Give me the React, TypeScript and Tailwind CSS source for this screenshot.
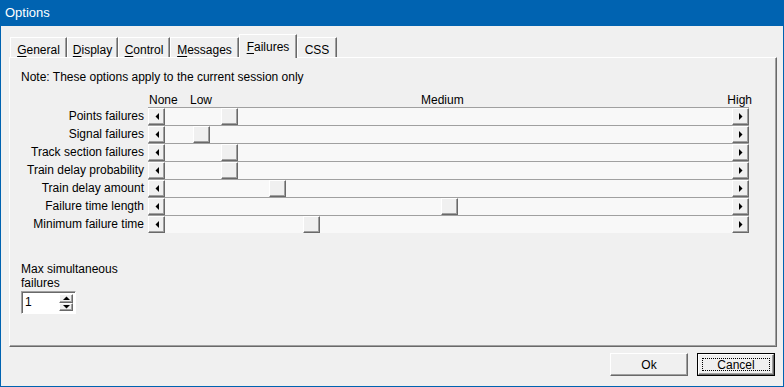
import type { ReactNode } from 'react';

const TABS = [
  { key: 'G', rest: 'eneral', w: 'w-[57px]' },
  { key: 'D', rest: 'isplay', w: 'w-[51px]' },
  { key: 'C', rest: 'ontrol', w: 'w-[52px]' },
  { key: 'M', rest: 'essages', w: 'w-[69px]' },
  { key: 'F', rest: 'ailures', w: 'w-[58px]', active: true },
  { key: '', rest: 'CSS', w: 'w-[40px]' },
];

const SLIDERS = [
  { label: 'Points failures', pos: 'ml-[56px]' },
  { label: 'Signal failures', pos: 'ml-[28px]' },
  { label: 'Track section failures', pos: 'ml-[56px]' },
  { label: 'Train delay probability', pos: 'ml-[56px]' },
  { label: 'Train delay amount', pos: 'ml-[104px]' },
  { label: 'Failure time length', pos: 'ml-[276px]' },
  { label: 'Minimum failure time', pos: 'ml-[138px]' },
];

function Btn3d({ className = '', children }: { className?: string; children?: ReactNode }) {
  return (
    <div
      className={`flex items-center justify-center bg-[#f0f0f0] border border-t-white border-l-white border-r-[#696969] border-b-[#696969] shadow-[inset_-1px_-1px_#a0a0a0] ${className}`}
    >
      {children}
    </div>
  );
}

function Arrow({ dir }: { dir: 'left' | 'right' | 'up' | 'down' }) {
  const pts = {
    left: '4,0 4,7 0.5,3.5',
    right: '0,0 0,7 3.5,3.5',
    up: '0,4 7,4 3.5,0.5',
    down: '0,0 7,0 3.5,3.5',
  }[dir];
  const horiz = dir === 'left' || dir === 'right';
  return (
    <svg width={horiz ? 4 : 7} height={horiz ? 7 : 4} viewBox={horiz ? '0 0 4 7' : '0 0 7 4'}>
      <polygon points={pts} fill="#000" />
    </svg>
  );
}

function Slider({ pos }: { pos: string }) {
  return (
    <div className="flex w-[601px] h-[18px] border-t border-[#a0a0a0]">
      <Btn3d className="w-[17px] h-[17px] shrink-0">
        <Arrow dir="left" />
      </Btn3d>
      <div className="flex flex-1 bg-[#f8f8f8]">
        <Btn3d className={`w-[17px] h-[17px] shrink-0 ${pos}`} />
      </div>
      <Btn3d className="w-[17px] h-[17px] shrink-0">
        <Arrow dir="right" />
      </Btn3d>
    </div>
  );
}

export default function App() {
  return (
    <div className="w-[784px] h-[387px] flex flex-col bg-[#f0f0f0] text-[12px] text-black font-['Liberation_Sans',Arial,sans-serif] overflow-hidden">
      <div className="h-[26px] shrink-0 bg-[#0063b1] text-white text-[13px] flex items-center pl-[5px]">Options</div>

      <div className="flex-1 flex flex-col border-x border-b border-[#0063b1] pl-[8px] pr-[6px] pt-[8px]">
        {/* tab strip */}
        <div className="h-[23px] flex items-end pl-[1px]">
          {TABS.map((t) => (
            <div
              key={t.rest}
              className={`${t.w} flex items-start justify-center pt-[3px] border-t border-l border-t-white border-l-white border-r border-r-[#696969] shadow-[inset_-1px_0_#a0a0a0] ${
                t.active ? 'h-[24px] -mb-px relative z-10 bg-[#f0f0f0] pt-[2px]' : 'h-[20px]'
              }`}
            >
              <span>
                {t.key && <span className="underline underline-offset-2">{t.key}</span>}
                {t.rest}
              </span>
            </div>
          ))}
        </div>

        {/* panel */}
        <div className="h-[290px] flex flex-col border border-t-white border-l-white border-r-[#696969] border-b-[#696969] shadow-[inset_-1px_-1px_#a0a0a0] pl-[11px] pt-[12px]">
          <div className="h-[14px] leading-[14px]">Note: These options apply to the current session only</div>

          <div className="flex mt-[9px] h-[14px] leading-[14px]">
            <div className="w-[127px] shrink-0" />
            <div className="flex w-[604px]">
              <span className="w-[41px] ml-[1px]">None</span>
              <span className="w-[231px]">Low</span>
              <span className="flex-1">Medium</span>
              <span>High</span>
            </div>
          </div>

          <div className="flex flex-col">
            {SLIDERS.map((s) => (
              <div key={s.label} className="flex items-center h-[18px]">
                <div className="w-[124px] shrink-0 text-right pr-px leading-[14px]">{s.label}</div>
                <div className="w-[3px]" />
                <Slider pos={s.pos} />
              </div>
            ))}
          </div>

          <div className="mt-[29px] leading-[14px]">
            <div>Max simultaneous</div>
            <div>failures</div>
          </div>
          <div className="mt-[1px] w-[55px] h-[23px] flex border border-t-[#a0a0a0] border-l-[#a0a0a0] border-r-white border-b-white shadow-[inset_1px_1px_#696969] bg-white">
            <div className="flex-1 pl-[3px] pt-[3px] leading-[14px]">1</div>
            <div className="flex flex-col w-[16px] py-[2px] pr-[2px]">
              <Btn3d className="flex-1 w-[14px]">
                <Arrow dir="up" />
              </Btn3d>
              <Btn3d className="flex-1 w-[14px]">
                <Arrow dir="down" />
              </Btn3d>
            </div>
          </div>
        </div>

        {/* buttons */}
        <div className="flex justify-end gap-[9px] mt-[6px] pr-[2px]">
          <Btn3d className="w-[78px] h-[23px]">Ok</Btn3d>
          <div className="w-[78px] h-[23px] border border-black flex">
            <Btn3d className="flex-1 p-[3px]">
              <div className="w-full h-full flex items-center justify-center border border-dotted border-black">Cancel</div>
            </Btn3d>
          </div>
        </div>
      </div>
    </div>
  );
}
